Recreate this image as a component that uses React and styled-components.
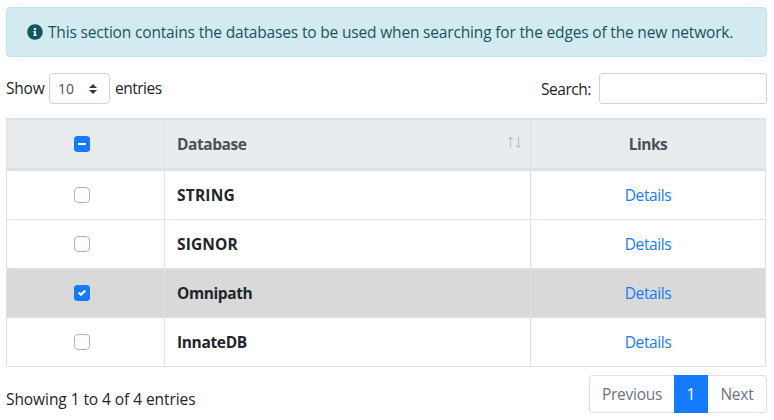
import React from 'react';
import styled, { createGlobalStyle } from 'styled-components';

const GlobalStyle = createGlobalStyle`
  *, *::before, *::after { box-sizing: border-box; }
  body {
    margin: 0;
    background: #fff;
    color: #212529;
    font: 400 15.5px/24px "Open Sans", "Noto Sans", sans-serif;
  }
`;

const Page = styled.main`
  width: 774px;
  height: 420px;
  padding: 7px 7px 0 6px;
  overflow: hidden;
`;

const Alert = styled.div`
  display: flex;
  align-items: center;
  height: 50px;
  padding: 0 20px;
  border: 1px solid #bee5eb;
  border-radius: 4px;
  background: #d3ebf0;
  color: #165461;
  svg { flex: none; margin-right: 5px; }
`;

const Label = styled.span`
  white-space: nowrap;
  letter-spacing: ${(p) => p.$track || 0}px;
`;

const Toolbar = styled.div`
  display: flex;
  align-items: center;
  height: 31px;
  margin-top: 16px;
`;

const LengthSelect = styled.button`
  display: flex;
  flex: none;
  align-items: center;
  justify-content: space-between;
  width: 61px;
  height: 31px;
  margin: 0 5px 0 0;
  padding: 1px 12px 0 8px;
  border: 1px solid #ced4da;
  border-radius: 4px;
  background: #fff;
  color: #495057;
  font: 400 14px/20px "Open Sans", "Noto Sans", sans-serif;
`;

const LengthGroup = styled.div`
  display: flex;
  align-items: center;
`;

const LengthText = styled(Label)`
  min-width: ${(p) => p.$width || 0}px;
  padding-bottom: 2px;
`;

const SearchGroup = styled.label`
  display: flex;
  align-items: center;
  gap: 8px;
  margin-left: auto;
`;

const SearchInput = styled.input`
  width: 168px;
  height: 31px;
  padding: 4px 8px;
  border: 1px solid #ced4da;
  border-radius: 3px;
  background: #fff;
  font: inherit;
`;

const Table = styled.div`
  width: 760px;
  margin-top: 14px;
  border-left: 1px solid #dee2e6;
`;

const Row = styled.div`
  display: grid;
  grid-template-columns: 158px 366px 235px;
  height: 49px;
  background: ${(p) => (p.$selected ? '#d9d9d9' : '#fff')};
`;

const HeadRow = styled(Row)`
  height: 53px;
  border-top: 2px solid #dee2e6;
  border-bottom: 3px solid #dee2e6;
  background: #e9ecef;
  color: #495057;
`;

const Cell = styled.div`
  display: flex;
  align-items: center;
  justify-content: ${(p) => (p.$center ? 'center' : 'space-between')};
  padding: ${(p) => (p.$center ? '0' : '0 7px 0 12px')};
  border-right: 1px solid #dee2e6;
  border-bottom: ${(p) => (p.$head ? 0 : 1)}px solid #dee2e6;
  font-weight: ${(p) => (p.$bold ? 700 : 400)};
`;

const CheckCell = styled(Cell)`
  padding: 0 7px 0 0;
`;

const Box = styled.span`
  display: flex;
  width: 16px;
  height: 16px;
  border: 1px solid ${(p) => (p.$on ? '#147bff' : '#adb5bd')};
  border-radius: ${(p) => (p.$on ? 3 : 4)}px;
  background: ${(p) => (p.$on ? '#147bff' : '#fff')};
  svg { margin: -1px; flex: none; }
`;

const Link = styled.a`
  color: #147bff;
  text-decoration: none;
  letter-spacing: -0.4px;
`;

const Footer = styled.div`
  display: flex;
  justify-content: space-between;
  margin-top: 8px;
`;

const Info = styled.div`
  padding-top: 12px;
`;

const Pager = styled.div`
  display: grid;
  grid-template-columns: 85px 34px 59px;
  height: 38px;
`;

const PageButton = styled.button`
  padding: 0;
  border: 1px solid ${(p) => (p.$active ? '#147bff' : '#dee2e6')};
  border-left-width: ${(p) => (p.$last ? 0 : 1)}px;
  border-right-width: ${(p) => (p.$first ? 0 : 1)}px;
  border-radius: ${(p) => (p.$first ? '4px 0 0 4px' : p.$last ? '0 4px 4px 0' : '0')};
  background: ${(p) => (p.$active ? '#147bff' : '#fff')};
  color: ${(p) => (p.$active ? '#fff' : '#6c757d')};
  font: inherit;
`;

const InfoIcon = () => (
  <svg width="16" height="16" viewBox="0 0 512 512" fill="#165461">
    <path d="M256 8C119 8 8 119 8 256s111 248 248 248 248-111 248-248S393 8 256 8zm0 110a42 42 0 1 1 0 84 42 42 0 0 1 0-84zm56 254c0 7-5 12-12 12h-88c-7 0-12-5-12-12v-24c0-7 5-12 12-12h12v-64h-12c-7 0-12-5-12-12v-24c0-7 5-12 12-12h64c7 0 12 5 12 12v100h12c7 0 12 5 12 12v24z" />
  </svg>
);

const SelectArrows = () => (
  <svg width="8" height="10" viewBox="0 0 4 5" fill="#343a40">
    <path d="M2 0L0 2h4zm0 5L0 3h4z" />
  </svg>
);

const SortIcon = () => (
  <svg width="15" height="16" viewBox="0 0 15 16" fill="none" stroke="#bfc4c8" strokeWidth="1.2">
    <path d="M2.5 11.8V1M.4 3.3L2.5 1.2L4.6 3.3M10.5 .8V11.5M8.4 9.3L10.5 11.4L12.6 9.3" />
  </svg>
);

const Check = ({ state }) => (
  <Box $on={Boolean(state)}>
    {state === 'mixed' && (
      <svg width="16" height="16"><path d="M4 8h8" stroke="#fff" strokeWidth="2" /></svg>
    )}
    {state === 'checked' && (
      <svg width="16" height="16" viewBox="0 0 16 16">
        <g transform="translate(4 4)" fill="#fff"><path d="M6.564.75l-3.59 3.612-1.538-1.55L0 4.26 2.974 7.25 8 2.193z" /></g>
      </svg>
    )}
  </Box>
);

const databases = [
  { name: 'STRING', track: 0.2 },
  { name: 'SIGNOR', track: 0.15 },
  { name: 'Omnipath', track: -0.4, selected: true },
  { name: 'InnateDB', track: -0.35 },
];

export default function App() {
  return (
    <Page>
      <GlobalStyle />
      <Alert>
        <InfoIcon />
        <Label $track={-0.17}>This section contains the databases to be used when searching for the edges of the new network.</Label>
      </Alert>
      <Toolbar>
        <LengthGroup>
          <LengthText $track={-0.2} $width={43}>Show</LengthText>
          <LengthSelect><Label>10</Label><SelectArrows /></LengthSelect>
          <LengthText $track={-0.5}>entries</LengthText>
        </LengthGroup>
        <SearchGroup><Label $track={-0.45}>Search:</Label><SearchInput /></SearchGroup>
      </Toolbar>
      <Table>
        <HeadRow>
          <CheckCell $head $center><Check state="mixed" /></CheckCell>
          <Cell $head $bold><Label $track={-0.45}>Database</Label><SortIcon /></Cell>
          <Cell $head $bold $center><Label $track={-0.45}>Links</Label></Cell>
        </HeadRow>
        {databases.map((db) => (
          <Row key={db.name} $selected={db.selected}>
            <CheckCell $center><Check state={db.selected ? 'checked' : undefined} /></CheckCell>
            <Cell $bold><Label $track={db.track}>{db.name}</Label></Cell>
            <Cell $center><Link>Details</Link></Cell>
          </Row>
        ))}
      </Table>
      <Footer>
        <Info><Label $track={-0.07}>Showing 1 to 4 of 4 entries</Label></Info>
        <Pager>
          <PageButton $first><Label $track={-0.25}>Previous</Label></PageButton>
          <PageButton $active>1</PageButton>
          <PageButton $last><Label $track={-0.2}>Next</Label></PageButton>
        </Pager>
      </Footer>
    </Page>
  );
}
